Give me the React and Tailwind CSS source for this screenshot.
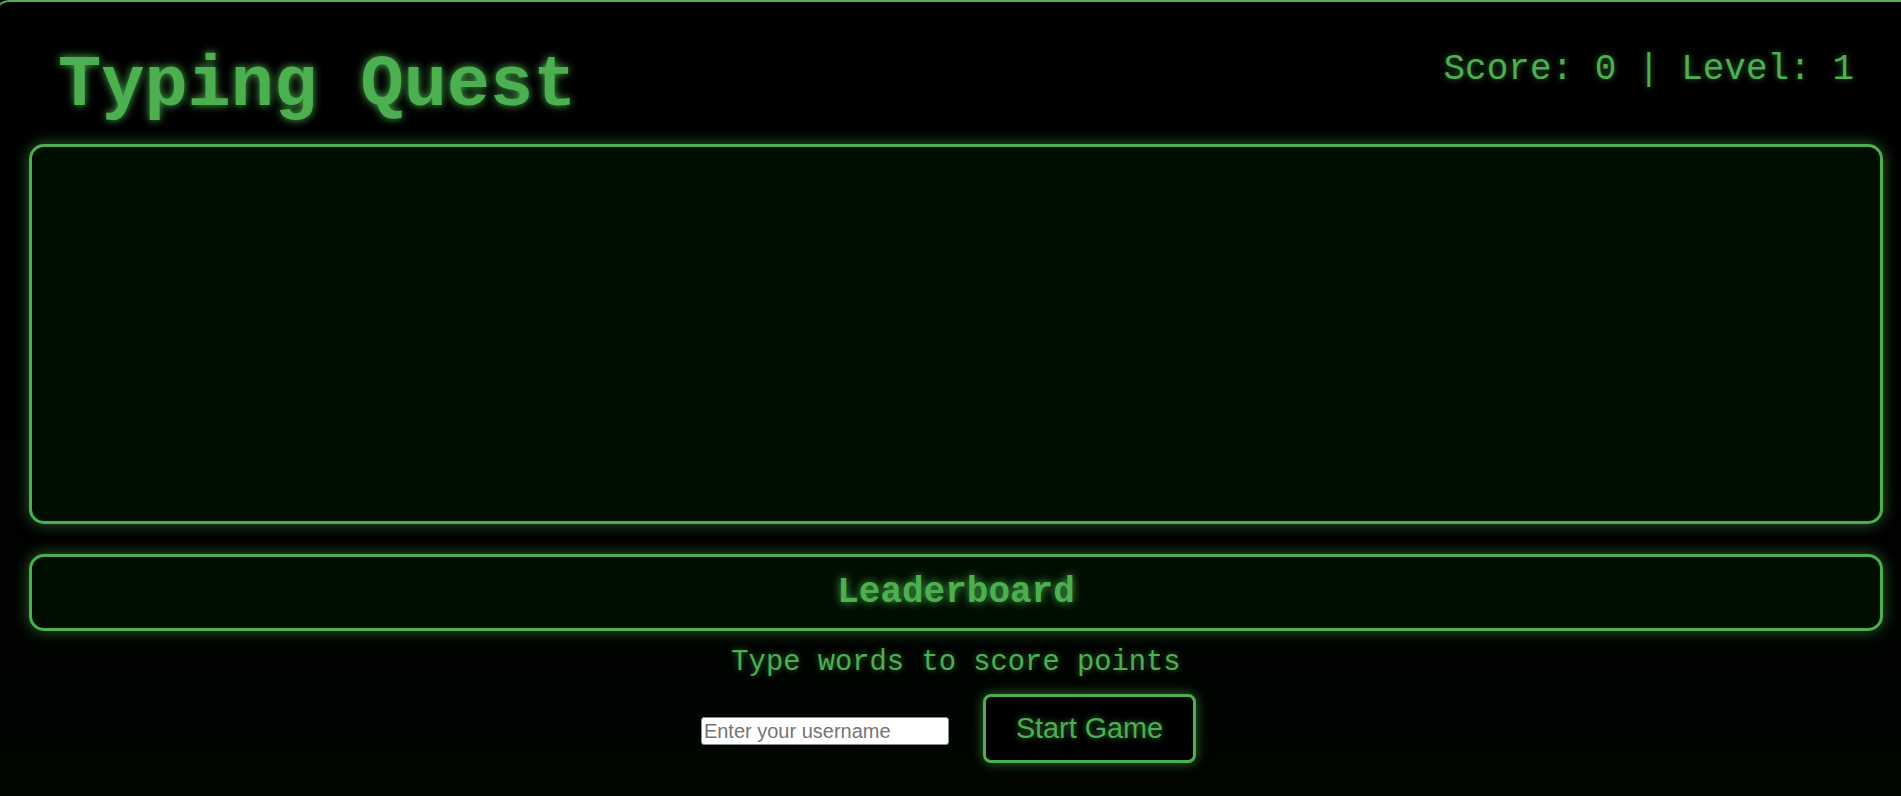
import { useState } from "react";

export default function App() {
  const [username, setUsername] = useState("");
  const [score] = useState(0);
  const [level] = useState(1);

  return (
    <div className="w-full min-h-[796px] overflow-hidden bg-gradient-to-b from-black to-[#010601] font-['Liberation_Mono','Courier_New',monospace] text-[#4caf50]">
      <div className="-ml-[6px] -mr-[40px] min-h-[796px] border-2 border-b-0 border-[#4caf50] rounded-t-[15px] pl-[33px] pr-[56px] pt-[43px]">
        {/* Header */}
        <div className="flex justify-between items-start px-[29px]">
          <h1 className="text-[72px] font-bold leading-[normal] [text-shadow:0_0_8px_#4caf50]">
            Typing Quest
          </h1>
          <div className="mt-[4px] text-[36px] leading-[normal] [text-shadow:0_0_6px_rgba(76,175,80,0.6)]">
            Score: {score} | Level: {level}
          </div>
        </div>

        {/* Game area */}
        <div className="mt-[17px] h-[380px] rounded-[15px] border-[3px] border-[#4caf50] bg-[#000e00] shadow-[0_0_15px_rgba(76,175,80,0.55)]"></div>

        {/* Leaderboard */}
        <div className="mt-[30px] rounded-[15px] border-[3px] border-[#4caf50] bg-[#000e00] py-[15px] text-center shadow-[0_0_15px_rgba(76,175,80,0.55)]">
          <h2 className="text-[36px] font-bold leading-[normal] [text-shadow:0_0_8px_#4caf50]">
            Leaderboard
          </h2>
        </div>

        <p className="mt-[15px] text-center text-[28.8px] leading-[normal] [text-shadow:0_0_6px_rgba(76,175,80,0.6)]">
          Type words to score points
        </p>

        {/* Controls */}
        <div className="mt-[15px] flex justify-center items-baseline">
          <input
            type="text"
            value={username}
            onChange={(e) => setUsername(e.target.value)}
            placeholder="Enter your username"
            className="w-[248px] h-[28px] bg-white border border-[#8a8a8a] rounded-[3px] px-[2px] text-[20px] text-black placeholder:text-[#757575] font-['Liberation_Sans',Arial,sans-serif] outline-none"
          />
          <button className="ml-[34px] mr-[15px] rounded-[8px] border-[3px] border-[#4caf50] bg-black px-[30px] py-[15px] text-[28.8px] leading-[normal] text-[#4caf50] font-['Liberation_Sans',Arial,sans-serif] shadow-[0_0_12px_rgba(76,175,80,0.6)] [text-shadow:0_0_6px_rgba(76,175,80,0.7)]">
            Start Game
          </button>
        </div>
      </div>
    </div>
  );
}
